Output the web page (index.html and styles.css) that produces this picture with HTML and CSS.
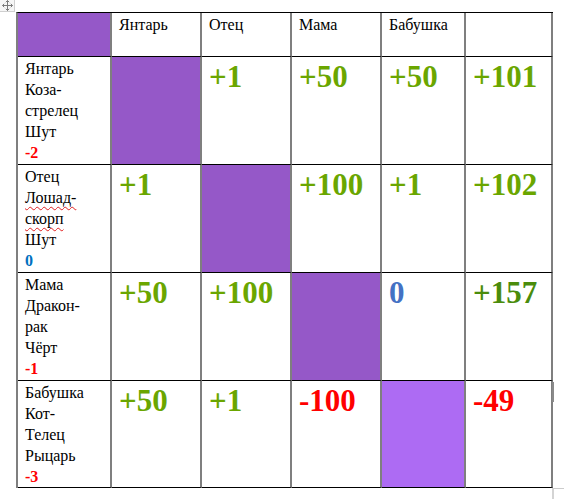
FILE: index.html
```html
<html>
<head>
    <link rel="stylesheet" href="styles.css">
</head>
<body>
    <div class="move-handle">
        <svg width="11" height="11" viewBox="0 0 11 11">
            <path d="M5.5 0.5 V10.5 M0.5 5.5 H10.5 M3.8 2.2 L5.5 0.5 L7.2 2.2 M3.8 8.8 L5.5 10.5 L7.2 8.8 M2.2 3.8 L0.5 5.5 L2.2 7.2 M8.8 3.8 L10.5 5.5 L8.8 7.2" stroke="#7a7a7a" stroke-width="1" fill="none"/>
        </svg>
    </div>

    <table class="family">
        <tr class="head">
            <td class="c1 purple"></td>
            <td class="c2">Янтарь</td>
            <td class="c3">Отец</td>
            <td class="c4">Мама</td>
            <td class="c5">Бабушка</td>
            <td class="c6"></td>
        </tr>
        <tr>
            <td class="who">Янтарь<br>Коза-<br>стрелец<br>Шут<br><b class="red">-2</b></td>
            <td class="purple"></td>
            <td class="num green">+1</td>
            <td class="num green">+50</td>
            <td class="num green">+50</td>
            <td class="num green">+101</td>
        </tr>
        <tr>
            <td class="who">Отец<br><span class="typo">Лошад-</span><br><span class="typo">скорп</span><br>Шут<br><b class="blue">0</b></td>
            <td class="num green">+1</td>
            <td class="purple"></td>
            <td class="num green">+100</td>
            <td class="num green">+1</td>
            <td class="num green">+102</td>
        </tr>
        <tr>
            <td class="who">Мама<br>Дракон-<br>рак<br>Чёрт<br><b class="red">-1</b></td>
            <td class="num green">+50</td>
            <td class="num green">+100</td>
            <td class="purple"></td>
            <td class="num zero">0</td>
            <td class="num dark-green">+157</td>
        </tr>
        <tr class="last">
            <td class="who">Бабушка<br>Кот-<br>Телец<br>Рыцарь<br><b class="red">-3</b></td>
            <td class="num green">+50</td>
            <td class="num green">+1</td>
            <td class="num red">-100</td>
            <td class="lilac"></td>
            <td class="num red">-49</td>
        </tr>
    </table>

    <div class="side-grip"></div>
    <div class="corner-grip"></div>
</body>
</html>
```

FILE: styles.css
```css
body{
    margin: 0;
    padding: 12px 0 0 16px;
    font-family: "Liberation Serif", "Times New Roman", serif;
    font-size: 18px;
    background: #fff;
    color: #000;
}
.move-handle{
    position: absolute;
    top: 0;
    left: 0;
    width: 14px;
    height: 11px;
    border: 1px solid #cfcfcf;
    border-top: none;
    border-left: none;
    background: #f6f6f6;
    display: flex;
    align-items: center;
    justify-content: center;
}
.family{
    border-collapse: separate;
    border-spacing: 0;
    table-layout: fixed;
    width: 537px;
    border-left: 2px solid #7f7f7f;
    border-top: 1px solid #000;
}
.family td{
    box-sizing: border-box;
    border-right: 2px solid #7f7f7f;
    border-bottom: 1px solid #000;
    padding: 1px 7px 0 7px;
    vertical-align: top;
    line-height: 21px;
    height: 108px;
}
.family .c1{ width: 94px; }
.family .c2{ width: 90px; }
.family .c3{ width: 90px; }
.family .c4{ width: 90px; }
.family .c5{ width: 84px; }
.family .c6{ width: 87px; }
.family tr.head td{
    height: 44px;
}
.family tr.last td{
    height: 107px;
}
.who{
    padding-left: 8px;
}
.purple{
    background: #9558c8;
}
.lilac{
    background: #ad6bf3;
}
.num{
    font-size: 31px;
    font-weight: bold;
}
.family td.num{
    padding-top: 3px;
    line-height: 34px;
}
.green{
    color: #6aa600;
}
.dark-green{
    color: #4a8c0c;
}
.zero{
    color: #4472c4;
}
.red{
    color: #ff0000;
}
.blue{
    color: #0070c0;
}
.typo{
    text-decoration: underline wavy #e02020;
    text-decoration-thickness: 1px;
    text-underline-offset: 3px;
}
.side-grip{
    position: absolute;
    left: 552px;
    top: 382px;
    width: 2px;
    height: 20px;
    background: #8a8a8a;
}
.corner-grip{
    position: absolute;
    left: 552px;
    top: 488px;
    width: 12px;
    height: 11px;
    border-top: 1px solid #cccccc;
    border-left: 2px solid #d4d4d4;
}
```
